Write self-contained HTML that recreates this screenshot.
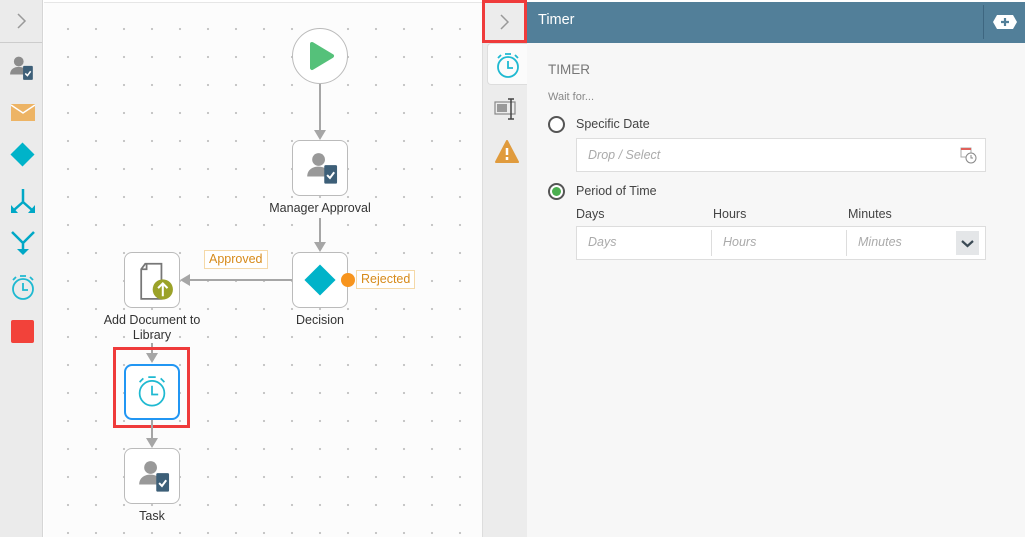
<!DOCTYPE html>
<html><head><style>
*{box-sizing:border-box;margin:0;padding:0}
body{width:1025px;height:537px;overflow:hidden;background:#fff;font-family:"Liberation Sans",sans-serif;position:relative}
.abs{position:absolute}
#side{left:0;top:0;width:43px;height:537px;background:#ebebeb;border-right:1px solid #d6d6d6}
#canvas{left:44px;top:2px;width:438px;height:535px;background-color:#fcfcfc;background-image:radial-gradient(circle,#c4c4c4 0 1px,transparent 1.3px);background-size:28px 28px;background-position:10px 12px;border-top:1px solid #e6e6e6}
.node{position:absolute;width:56px;height:56px;border:1px solid #bbb;border-radius:8px;background:#fff}
.node svg{position:absolute;left:0;top:0}
.lbl{position:absolute;font-size:12.5px;color:#333;text-align:center;width:140px}
.line{position:absolute;background:#a6a6a6}
.tag{position:absolute;font-size:12.5px;color:#d68a1a;border:1px solid #f5d9a8;background:#fff;padding:1px 4px;line-height:15px}
#strip{left:482px;top:0;width:45px;height:537px;background:#ececec;border-left:1px solid #ddd}
#panel{left:527px;top:43px;width:498px;height:494px;background:#f7f7f7}
#hdr{left:527px;top:2px;width:498px;height:41px;background:#527f99;color:#fff;font-size:14.5px;padding:10px 11px}
.txt{position:absolute;color:#444;font-size:12.5px}
.inp{position:absolute;background:#fff;border:1px solid #ddd}
.ph{position:absolute;color:#aaa;font-style:italic;font-size:12.5px}
</style></head><body>
<div id="side" class="abs">
 <div class="abs" style="left:0;top:0;width:42px;height:43px;border-bottom:1px solid #ccc;text-align:center">
  <svg width="12" height="18" viewBox="0 0 12 18" style="margin-top:12px"><path d="M3 2l7 7-7 7" fill="none" stroke="#999" stroke-width="1.5"/></svg></div>
 <svg class="abs" style="left:9px;top:55px" width="26" height="26" viewBox="0 0 24 24"><circle cx="9" cy="6" r="4.5" fill="#8c8c8c"/><path d="M1 18c0-5 4-7 8-7s6 2 7 3v4z" fill="#8c8c8c"/><rect x="13" y="10" width="9" height="13" rx="1" fill="#3d5f78"/><path d="M15 17l2 2 3-4" stroke="#fff" stroke-width="1.4" fill="none"/></svg>
 <div class="abs" style="left:11px;top:104px;width:24px;height:17px;background:#edb465"><svg width="24" height="17"><path d="M0 1l12 8 12-8" stroke="#fff" stroke-width="1.5" fill="none"/></svg></div>
 <div class="abs" style="left:14px;top:146px;width:17px;height:17px;background:#00b3c9;transform:rotate(45deg)"></div>
 <svg class="abs" style="left:10px;top:188px" width="26" height="26" viewBox="0 0 26 26"><path d="M13 1v13M13 14l-9 8M13 14l9 8" stroke="#00a8c6" stroke-width="2.5" fill="none"/><path d="M1 17v8h7zM25 17v8h-7z" fill="#00a8c6"/></svg>
 <svg class="abs" style="left:10px;top:230px" width="26" height="26" viewBox="0 0 26 26"><path d="M2 2l11 11 11-11M13 13v8" stroke="#00a8c6" stroke-width="2.5" fill="none"/><path d="M7 19h12l-6 6z" fill="#00a8c6"/></svg>
 <svg class="abs" style="left:10px;top:274px" width="26" height="26" viewBox="0 0 26 26"><circle cx="13" cy="15" r="10" stroke="#1fb9d1" stroke-width="1.8" fill="none"/><path d="M10 2h6M13 9v7h5M3 6l3-3M23 6l-3-3" stroke="#1fb9d1" stroke-width="1.8" fill="none"/></svg>
 <div class="abs" style="left:11px;top:320px;width:23px;height:23px;background:#f2423a;border-radius:2px"></div>
</div>
<div id="canvas" class="abs"></div>
<!-- flow -->
<div class="abs" style="left:292px;top:28px;width:56px;height:56px;border:1px solid #bbb;border-radius:50%;background:#fff"><svg class="abs" style="left:0;top:0" width="54" height="54"><path d="M19 15L39 27L19 39z" fill="#55c17a" stroke="#55c17a" stroke-width="4" stroke-linejoin="round"/></svg></div>
<div class="line" style="left:319px;top:84px;width:2px;height:50px"></div>
<svg class="abs" style="left:314px;top:130px" width="12" height="10"><path d="M0 0h12l-6 10z" fill="#a6a6a6"/></svg>
<div class="node" style="left:292px;top:140px"><svg width="54" height="54" viewBox="-9 -7 38 38"><circle cx="9" cy="6" r="4.5" fill="#999"/><path d="M1 18c0-5 4-7 8-7s6 2 7 3v4z" fill="#999"/><rect x="13" y="10" width="9" height="13" rx="1" fill="#3d5f78"/><path d="M15 17l2 2 3-4" stroke="#fff" stroke-width="1.4" fill="none"/></svg></div>
<div class="lbl" style="left:250px;top:201px">Manager Approval</div>
<div class="line" style="left:319px;top:218px;width:2px;height:26px"></div>
<svg class="abs" style="left:314px;top:242px" width="12" height="10"><path d="M0 0h12l-6 10z" fill="#a6a6a6"/></svg>
<div class="node" style="left:292px;top:252px"><div class="abs" style="left:16px;top:16px;width:22px;height:22px;background:#00b3c9;transform:rotate(45deg)"></div></div>
<div class="abs" style="left:341px;top:273px;width:14px;height:14px;border-radius:50%;background:#f7941d"></div>
<div class="tag" style="left:356px;top:270px">Rejected</div>
<div class="lbl" style="left:250px;top:313px">Decision</div>
<div class="line" style="left:188px;top:279px;width:104px;height:2px"></div>
<svg class="abs" style="left:180px;top:274px" width="10" height="12"><path d="M0 6l10-6v12z" fill="#a6a6a6"/></svg>
<div class="tag" style="left:204px;top:250px">Approved</div>
<div class="node" style="left:124px;top:252px"><svg width="54" height="54" viewBox="6 8 40 40"><path d="M21 16h12v26h-15v-22z" fill="#fff" stroke="#777" stroke-width="1.3"/><path d="M18 20h4v-4" fill="none" stroke="#777" stroke-width="1.3"/><circle cx="34" cy="35" r="7.5" fill="#9ba229"/><path d="M34 40v-9M30.5 34l3.5-3.5 3.5 3.5" stroke="#fff" stroke-width="1.5" fill="none"/></svg></div>
<div class="lbl" style="left:82px;top:313px;line-height:15px">Add Document to<br>Library</div>
<div class="line" style="left:151px;top:343px;width:2px;height:12px"></div>
<svg class="abs" style="left:146px;top:353px" width="12" height="10"><path d="M0 0h12l-6 10z" fill="#a6a6a6"/></svg>
<div class="abs" style="left:113px;top:347px;width:77px;height:81px;border:3px solid #ef3b3b"></div>
<div class="node" style="left:124px;top:364px;border:2px solid #2196f3"><svg width="52" height="52" viewBox="-8 -7 42 42"><circle cx="13" cy="15" r="10" stroke="#1fb9d1" stroke-width="1.4" fill="none"/><path d="M10 2h6M13 9v7h5M3 6l3-3M23 6l-3-3" stroke="#1fb9d1" stroke-width="1.4" fill="none"/></svg></div>
<div class="line" style="left:151px;top:420px;width:2px;height:20px"></div>
<svg class="abs" style="left:146px;top:438px" width="12" height="10"><path d="M0 0h12l-6 10z" fill="#a6a6a6"/></svg>
<div class="node" style="left:124px;top:448px"><svg width="54" height="54" viewBox="-9 -7 38 38"><circle cx="9" cy="6" r="4.5" fill="#999"/><path d="M1 18c0-5 4-7 8-7s6 2 7 3v4z" fill="#999"/><rect x="13" y="10" width="9" height="13" rx="1" fill="#3d5f78"/><path d="M15 17l2 2 3-4" stroke="#fff" stroke-width="1.4" fill="none"/></svg></div>
<div class="lbl" style="left:82px;top:509px">Task</div>
<!-- right -->
<div id="strip" class="abs"></div>
<div class="abs" style="left:482px;top:0;width:45px;height:43px;border:3px solid #ef3b3b;background:#ececec"><svg width="39" height="37"><path d="M16 12l7 7-7 7" fill="none" stroke="#999" stroke-width="1.5"/></svg></div>
<div class="abs" style="left:487px;top:43px;width:41px;height:42px;background:#fbfbfb;border:1px solid #ddd;border-right:none;border-radius:4px 0 0 4px"><svg width="40" height="42" viewBox="-7 -8 40 42"><circle cx="13" cy="15" r="10" stroke="#1fb9d1" stroke-width="1.8" fill="none"/><path d="M10 2h6M13 9v7h5M3 6l3-3M23 6l-3-3" stroke="#1fb9d1" stroke-width="1.8" fill="none"/></svg></div>
<svg class="abs" style="left:494px;top:97px" width="26" height="24"><rect x="1" y="5" width="20" height="12" fill="none" stroke="#888" stroke-width="1.2"/><rect x="3" y="7" width="10" height="8" fill="#999"/><path d="M14 2h6M17 2v20M14 22h6" stroke="#444" stroke-width="1.5"/></svg>
<svg class="abs" style="left:495px;top:140px" width="24" height="24"><path d="M12 1L23 22H1z" fill="#e09b3d" stroke="#e09b3d" stroke-width="2" stroke-linejoin="round"/><path d="M12 8v7M12 17v3" stroke="#fff" stroke-width="2.5"/></svg>
<div id="panel" class="abs"></div>
<div id="hdr" class="abs">Timer</div>
<div class="abs" style="left:983px;top:5px;width:1px;height:34px;background:#3e6680"></div>
<svg class="abs" style="left:992px;top:14px" width="26" height="16"><path d="M5 1h16l4 7-4 7H5L1 8z" fill="#fff"/><path d="M13 4v8M9 8h8" stroke="#527f99" stroke-width="2.2"/></svg>
<div class="txt" style="left:548px;top:62px;font-size:13.5px;color:#777">TIMER</div>
<div class="txt" style="left:548px;top:91px;font-size:11px;color:#888">Wait for...</div>
<div class="abs" style="left:548px;top:116px;width:17px;height:17px;border:2px solid #555;border-radius:50%;background:#fff"></div>
<div class="txt" style="left:576px;top:117px">Specific Date</div>
<div class="inp" style="left:576px;top:138px;width:410px;height:34px"></div>
<div class="ph" style="left:588px;top:148px">Drop / Select</div>
<svg class="abs" style="left:960px;top:146px" width="18" height="18"><rect x="1" y="2" width="10" height="9" fill="none" stroke="#aaa"/><path d="M1 2h10v2H1z" fill="#e0605a"/><circle cx="11" cy="12" r="5" fill="#fff" stroke="#888"/><path d="M11 9v3h2" stroke="#888" fill="none"/></svg>
<div class="abs" style="left:548px;top:183px;width:17px;height:17px;border:2px solid #555;border-radius:50%;background:#fff"><div style="margin:2px;width:9px;height:9px;border-radius:50%;background:#4caf50"></div></div>
<div class="txt" style="left:576px;top:184px">Period of Time</div>
<div class="txt" style="left:576px;top:207px">Days</div>
<div class="txt" style="left:713px;top:207px">Hours</div>
<div class="txt" style="left:848px;top:207px">Minutes</div>
<div class="inp" style="left:576px;top:226px;width:410px;height:34px"></div>
<div class="abs" style="left:711px;top:230px;width:1px;height:26px;background:#ddd"></div>
<div class="abs" style="left:846px;top:230px;width:1px;height:26px;background:#ddd"></div>
<div class="ph" style="left:588px;top:235px">Days</div>
<div class="ph" style="left:723px;top:235px">Hours</div>
<div class="ph" style="left:858px;top:235px">Minutes</div>
<div class="abs" style="left:956px;top:231px;width:23px;height:24px;background:#e4e6e8"><svg width="23" height="24"><path d="M6 10l5.5 5 5.5-5" stroke="#3b4a55" stroke-width="2.2" fill="none"/></svg></div>
</body></html>
